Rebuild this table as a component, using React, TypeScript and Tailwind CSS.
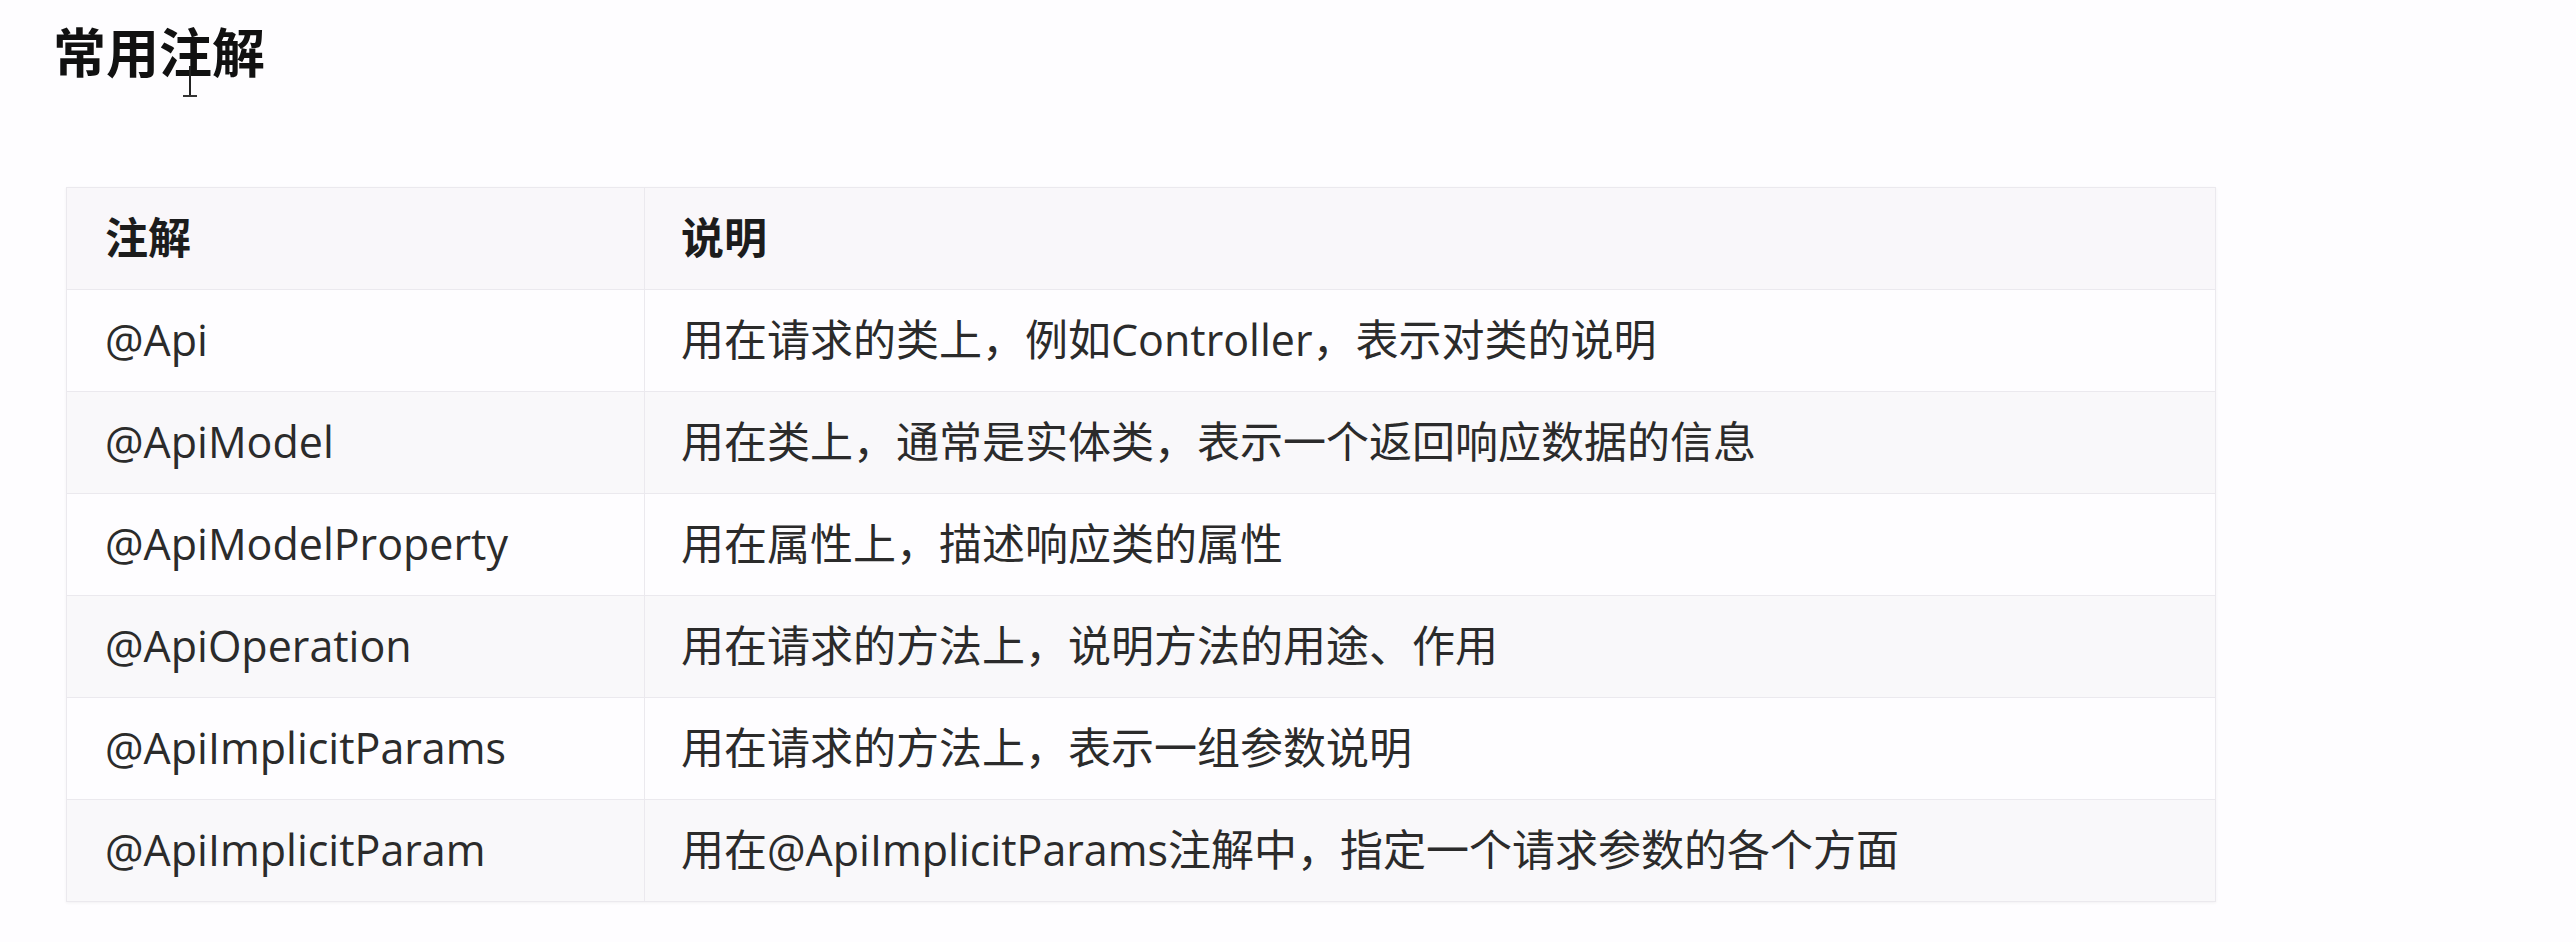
import React from "react";

const rows: [string, string][] = [
  ["@Api", "用在请求的类上，例如Controller，表示对类的说明"],
  ["@ApiModel", "用在类上，通常是实体类，表示一个返回响应数据的信息"],
  ["@ApiModelProperty", "用在属性上，描述响应类的属性"],
  ["@ApiOperation", "用在请求的方法上，说明方法的用途、作用"],
  ["@ApiImplicitParams", "用在请求的方法上，表示一组参数说明"],
  ["@ApiImplicitParam", "用在@ApiImplicitParams注解中，指定一个请求参数的各个方面"],
];

export default function App() {
  return (
    <div
      className="relative w-[2576px] h-[942px] bg-[#fefdff] text-[#2b2b2b] overflow-hidden"
      style={{ fontFamily: '"Open Sans", "Noto Sans CJK SC", sans-serif' }}
    >
      <h1 className="pl-[53px] pt-[27px] text-[53px] leading-[52px] font-bold text-[#111]">
        常用注解
      </h1>

      {/* text cursor */}
      <div className="absolute left-[183px] top-[66px] w-[14px] h-[31px] flex flex-col items-center">
        <div className="w-[2px] flex-1 bg-[#222]" />
        <div className="w-[14px] h-[2px] bg-[#333]" />
      </div>

      <div className="ml-[66px] mt-[108px] w-[2150px] border border-[#ebe9ee] shadow-[0_1px_3px_rgba(0,0,0,0.05)]">
        <div className="grid grid-cols-[578px_1fr] h-[101px] bg-[#f9f7fa] font-bold text-[43px] text-[#1c1c1c]">
          <div className="flex items-center pl-[38px] border-r border-[#ebe9ee]">注解</div>
          <div className="flex items-center pl-[36px]">说明</div>
        </div>
        {rows.map(([name, desc], i) => (
          <div
            key={name}
            className={`grid grid-cols-[578px_1fr] h-[102px] border-t border-[#ebe9ee] text-[43px] ${
              i % 2 === 1 ? "bg-[#f9f8fa]" : "bg-[#fefdff]"
            }`}
          >
            <div className="flex items-center pl-[38px] border-r border-[#ebe9ee]">{name}</div>
            <div className="flex items-center pl-[36px]">{desc}</div>
          </div>
        ))}
      </div>
    </div>
  );
}
